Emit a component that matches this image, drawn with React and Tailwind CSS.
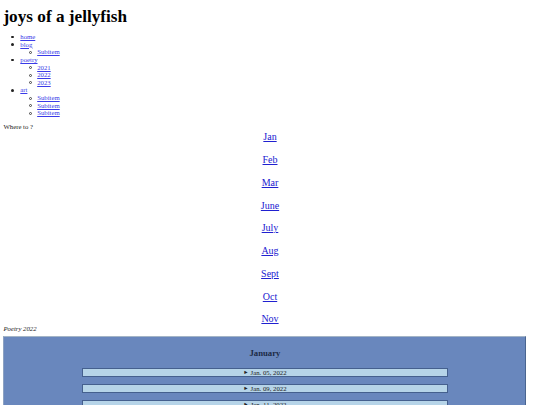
import React from "react";

const months = ["Jan", "Feb", "Mar", "June", "July", "Aug", "Sept", "Oct", "Nov"];
const entries = ["Jan. 05, 2022", "Jan. 09, 2022", "Jan. 11, 2022"];

const Link = ({ children, className = "" }) => (
  <a href="#" className={`underline ${className}`}>
    {children}
  </a>
);

// list markers drawn by hand, the browser ones are too small at this size
const Item = ({ hollow, children }) => (
  <li className="relative">
    <span
      className={`absolute top-[2.6px] ${
        hollow
          ? "left-[-8.5px] h-[3px] w-[3px] rounded-full border-[0.8px] border-[#444]"
          : "left-[-9px] h-[2.6px] w-[2.6px] rounded-full bg-[#222]"
      }`}
    />
    {children}
  </li>
);

const SubList = ({ items }) => (
  <ul className="pl-[16.9px]">
    {items.map((item, i) => (
      <Item key={i} hollow>
        <Link className="text-[#3a3ae8]">{item}</Link>
      </Item>
    ))}
  </ul>
);

export default function App() {
  return (
    <div className="min-h-[405px] bg-white px-[3.4px] pb-[10px] font-['Liberation_Serif','Times_New_Roman',serif] text-[6.75px] leading-[7.6px] text-[#222]">
      <h1 className="pt-[7px] text-[17.2px] font-bold leading-[19.5px] text-black">
        joys of a jellyfish
      </h1>

      <ul className="mt-[6.7px] pl-[16.9px]">
        <Item>
          <Link className="text-[#3a3ae8]">home</Link>
        </Item>
        <Item>
          <Link className="text-[#3a3ae8]">blog</Link>
          <SubList items={["Subitem"]} />
        </Item>
        <Item>
          <Link className="text-[#3a3ae8]">poetry</Link>
          <SubList items={["2021", "2022", "2023"]} />
        </Item>
        <Item>
          <Link className="text-[#3a3ae8]">art</Link>
          <SubList items={["Subitem", "Subitem", "Subitem"]} />
        </Item>
      </ul>

      <p className="mt-[6.2px]">Where to ?</p>

      <nav className="mt-[0.8px] flex flex-col items-center gap-[11.25px]">
        {months.map((m) => (
          <Link key={m} className="text-[10px] leading-[11.5px] text-[#2020d0]">
            {m}
          </Link>
        ))}
      </nav>

      <p className="mt-[0px] italic">Poetry 2022</p>

      <section className="mt-[3.4px] w-[523px] border border-t-[#a3b4c6] border-l-[#8da2c2] border-r-[#4a6590] border-b-[#4a6590] bg-[#6987bd] pt-[11.5px] pb-[8px]">
        <h2 className="text-center text-[8.7px] font-bold leading-[10px] text-[#1c2a45]">
          January
        </h2>
        <div className="mt-[9.5px] flex flex-col items-center gap-[7px]">
          {entries.map((e) => (
            <div
              key={e}
              className="flex h-[9px] w-[366px] items-center justify-center border border-[#45608e] bg-[#b6d4e8] text-[6.75px] leading-[7px] text-[#222]"
            >
              <span className="mr-[2px] text-[5.5px]">►</span>
              {e}
            </div>
          ))}
        </div>
      </section>
    </div>
  );
}
